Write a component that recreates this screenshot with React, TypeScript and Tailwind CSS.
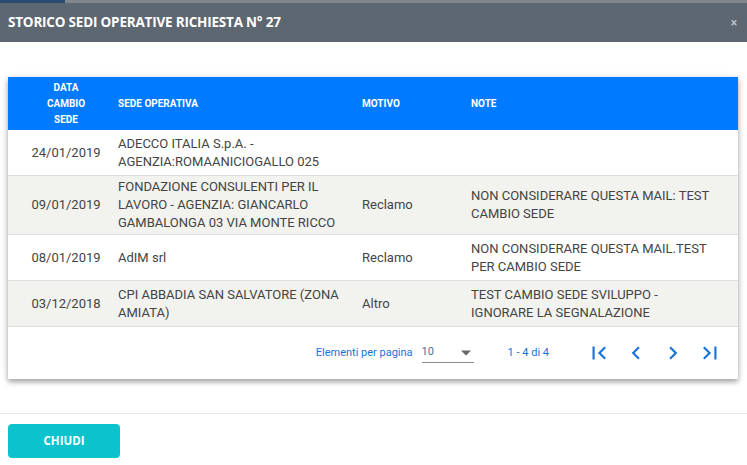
const rows = [
  {
    date: "24/01/2019",
    sede: "ADECCO ITALIA S.p.A. - AGENZIA:ROMAANICIOGALLO 025",
    motivo: "",
    note: "",
  },
  {
    date: "09/01/2019",
    sede: "FONDAZIONE CONSULENTI PER IL LAVORO - AGENZIA: GIANCARLO GAMBALONGA 03 VIA MONTE RICCO",
    motivo: "Reclamo",
    note: "NON CONSIDERARE QUESTA MAIL: TEST CAMBIO SEDE",
  },
  {
    date: "08/01/2019",
    sede: "AdIM srl",
    motivo: "Reclamo",
    note: "NON CONSIDERARE QUESTA MAIL.TEST PER CAMBIO SEDE",
  },
  {
    date: "03/12/2018",
    sede: "CPI ABBADIA SAN SALVATORE (ZONA AMIATA)",
    motivo: "Altro",
    note: "TEST CAMBIO SEDE SVILUPPO - IGNORARE LA SEGNALAZIONE",
  },
];

const cols = "grid grid-cols-[110px_244px_109px_1fr]";

const PagerIcon = ({ d }: { d: string }) => (
  <button className="flex h-[37px] w-[37px] items-center justify-center text-[#1a73d9]">
    <svg width="26" height="26" viewBox="0 0 24 24" fill="currentColor">
      <path d={d} />
    </svg>
  </button>
);

export default function App() {
  return (
    <div className="flex h-[465px] w-[747px] flex-col overflow-hidden bg-white font-['Roboto',sans-serif]">
      <div className="flex h-[3px]">
        <div className="w-[65px] bg-[#2c4b70]" />
        <div className="flex-1 bg-[#7f868d]" />
      </div>
      <div className="flex h-[39px] items-center justify-between bg-[#5d6771] pl-[8px] pr-[10px]">
        <h1 className="font-['Open_Sans',sans-serif] text-[13.5px] font-bold tracking-[-0.015em] text-white">
          STORICO SEDI OPERATIVE RICHIESTA N° 27
        </h1>
        <span className="text-[12px] font-bold leading-none text-[#b9c0c7]">×</span>
      </div>

      <div className="px-[8px] pr-[9px] pt-[35px]">
        <div className="bg-white shadow-[0_3px_5px_rgba(0,0,0,0.3),0_1px_8px_rgba(0,0,0,0.12)]">
          <div className={`${cols} h-[53px] items-center bg-[#007bff] text-[10px] font-bold leading-[16px] text-white`}>
            <div className="pl-[6px] text-center">
              DATA
              <br />
              CAMBIO
              <br />
              SEDE
            </div>
            <div>SEDE OPERATIVA</div>
            <div>MOTIVO</div>
            <div>NOTE</div>
          </div>
          {rows.map((r, i) => (
            <div
              key={r.date}
              className={`${cols} min-h-[46px] items-center border-b border-[#dddddd] py-[2px] text-[13px] leading-[18px] text-[#444] ${
                i % 2 === 1 ? "bg-[#f2f2ee]" : "bg-white"
              }`}
            >
              <div className="pl-[6px] text-center">{r.date}</div>
              <div className="pr-[12px]">{r.sede}</div>
              <div>{r.motivo}</div>
              <div className="pr-[22px]">{r.note}</div>
            </div>
          ))}
          <div className="flex h-[52px] items-center justify-end pr-[10px] text-[11px] text-[#1a73d9]">
            <span>Elementi per pagina</span>
            <div className="ml-[9px] flex h-[20px] w-[52px] items-center justify-between border-b border-[#8a8a8a] text-[#4a6fa0]">
              <span className="text-[11px]">10</span>
              <svg width="10" height="6" viewBox="0 0 10 5" className="mr-[3px]">
                <path d="M0 0h10L5 5z" fill="#666" />
              </svg>
            </div>
            <span className="ml-[34px] mr-[31px]">1 - 4 di 4</span>
            <PagerIcon d="M18.41 16.59L13.82 12l4.59-4.59L17 6l-6 6 6 6zM6 6h2v12H6z" />
            <PagerIcon d="M15.41 7.41L14 6l-6 6 6 6 1.41-1.41L10.83 12z" />
            <PagerIcon d="M10 6L8.59 7.41 13.17 12l-4.58 4.59L10 18l6-6z" />
            <PagerIcon d="M5.59 7.41L10.18 12l-4.59 4.59L7 18l6-6-6-6zM16 6h2v12h-2z" />
          </div>
        </div>
      </div>

      <div className="mt-[34px] border-t border-[#e6e6e6] px-[8px] pt-[10px]">
        <button className="h-[34px] w-[112px] rounded-[4px] bg-[#0cc3cd] font-['Open_Sans',sans-serif] text-[11.5px] font-bold text-white">
          CHIUDI
        </button>
      </div>
    </div>
  );
}
